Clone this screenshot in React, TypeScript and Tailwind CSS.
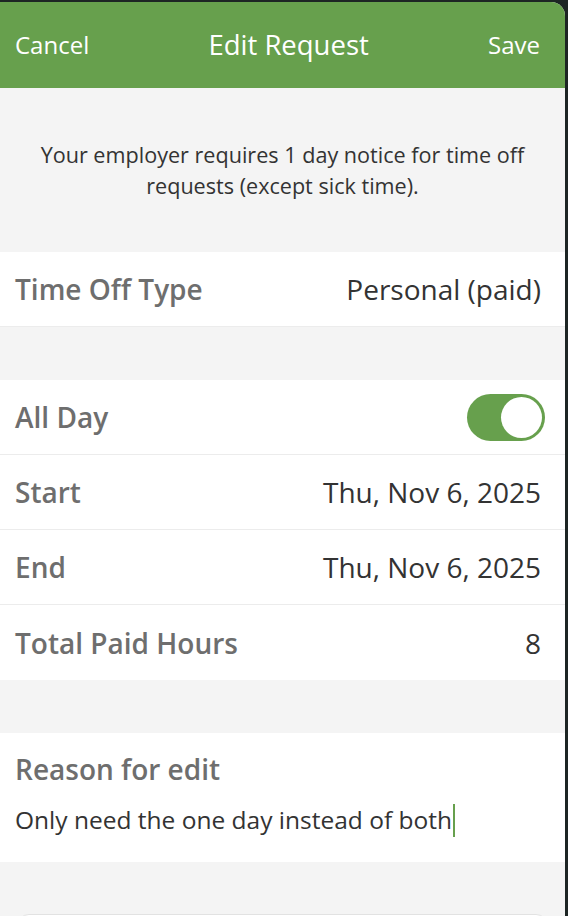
import { useState } from 'react';

const font = { fontFamily: '"Open Sans", Lato, sans-serif' };

function Row({ label, value, children }: { label: string; value?: string; children?: React.ReactNode }) {
  return (
    <div className="shrink-0 flex items-center justify-between h-[75px] pl-[15px] pr-[24px] bg-white border-b border-[#ececec] last:border-b-0">
      <span className="text-[28px] font-semibold text-[#6e6e6e]">{label}</span>
      {value && <span className="text-[28px] text-[#333]">{value}</span>}
      {children}
    </div>
  );
}

function Toggle({ on, onChange }: { on: boolean; onChange: () => void }) {
  return (
    <button
      onClick={onChange}
      className={`relative -mr-[4px] w-[78px] h-[47px] rounded-full ${on ? 'bg-[#67a04d]' : 'bg-[#ddd]'}`}
    >
      <span
        className={`absolute top-[3px] w-[41px] h-[41px] rounded-full bg-white ${on ? 'right-[3px]' : 'left-[3px]'}`}
      />
    </button>
  );
}

export default function App() {
  const [allDay, setAllDay] = useState(true);

  return (
    <div className="w-[568px] h-[916px] bg-[#1d2524] overflow-hidden pt-[2px]" style={font}>
      <div className="w-[565px] h-[914px] bg-[#f4f4f4] rounded-tr-[14px] overflow-hidden flex flex-col">
        {/* header */}
        <div className="shrink-0 h-[86px] bg-[#67a04d] flex items-center justify-between pl-[15px] pr-[25px] text-white">
          <span className="text-[24px]">Cancel</span>
          <span className="text-[27.5px]">Edit Request</span>
          <span className="text-[24px]">Save</span>
        </div>

        <p className="shrink-0 h-[164px] flex items-center justify-center text-center text-[21.6px] leading-[31px] text-[#333] px-[28px]">
          Your employer requires 1 day notice for time off requests (except sick time).
        </p>

        <Row label="Time Off Type" value="Personal (paid)" />

        <div className="shrink-0 h-[53px]" />

        <div className="shrink-0 flex flex-col">
          <Row label="All Day">
            <Toggle on={allDay} onChange={() => setAllDay(!allDay)} />
          </Row>
          <Row label="Start" value="Thu, Nov 6, 2025" />
          <Row label="End" value="Thu, Nov 6, 2025" />
          <Row label="Total Paid Hours" value="8" />
        </div>

        <div className="shrink-0 h-[53px]" />

        <div className="shrink-0 bg-white h-[129px] pl-[15px] pr-[24px] pt-[15px]">
          <div className="text-[28px] font-semibold text-[#6e6e6e]">Reason for edit</div>
          <div className="mt-[12px] text-[24.5px] text-[#333] flex items-center">
            Only need the one day instead of both
            <span className="inline-block w-[2px] h-[33px] bg-[#67a04d] ml-[1px]" />
          </div>
        </div>

        <div className="shrink-0 h-[52px]" />
        <div className="shrink-0 mx-[17px] h-[60px] bg-white rounded-[12px] border border-[#e2e2e2]" />
      </div>
    </div>
  );
}
